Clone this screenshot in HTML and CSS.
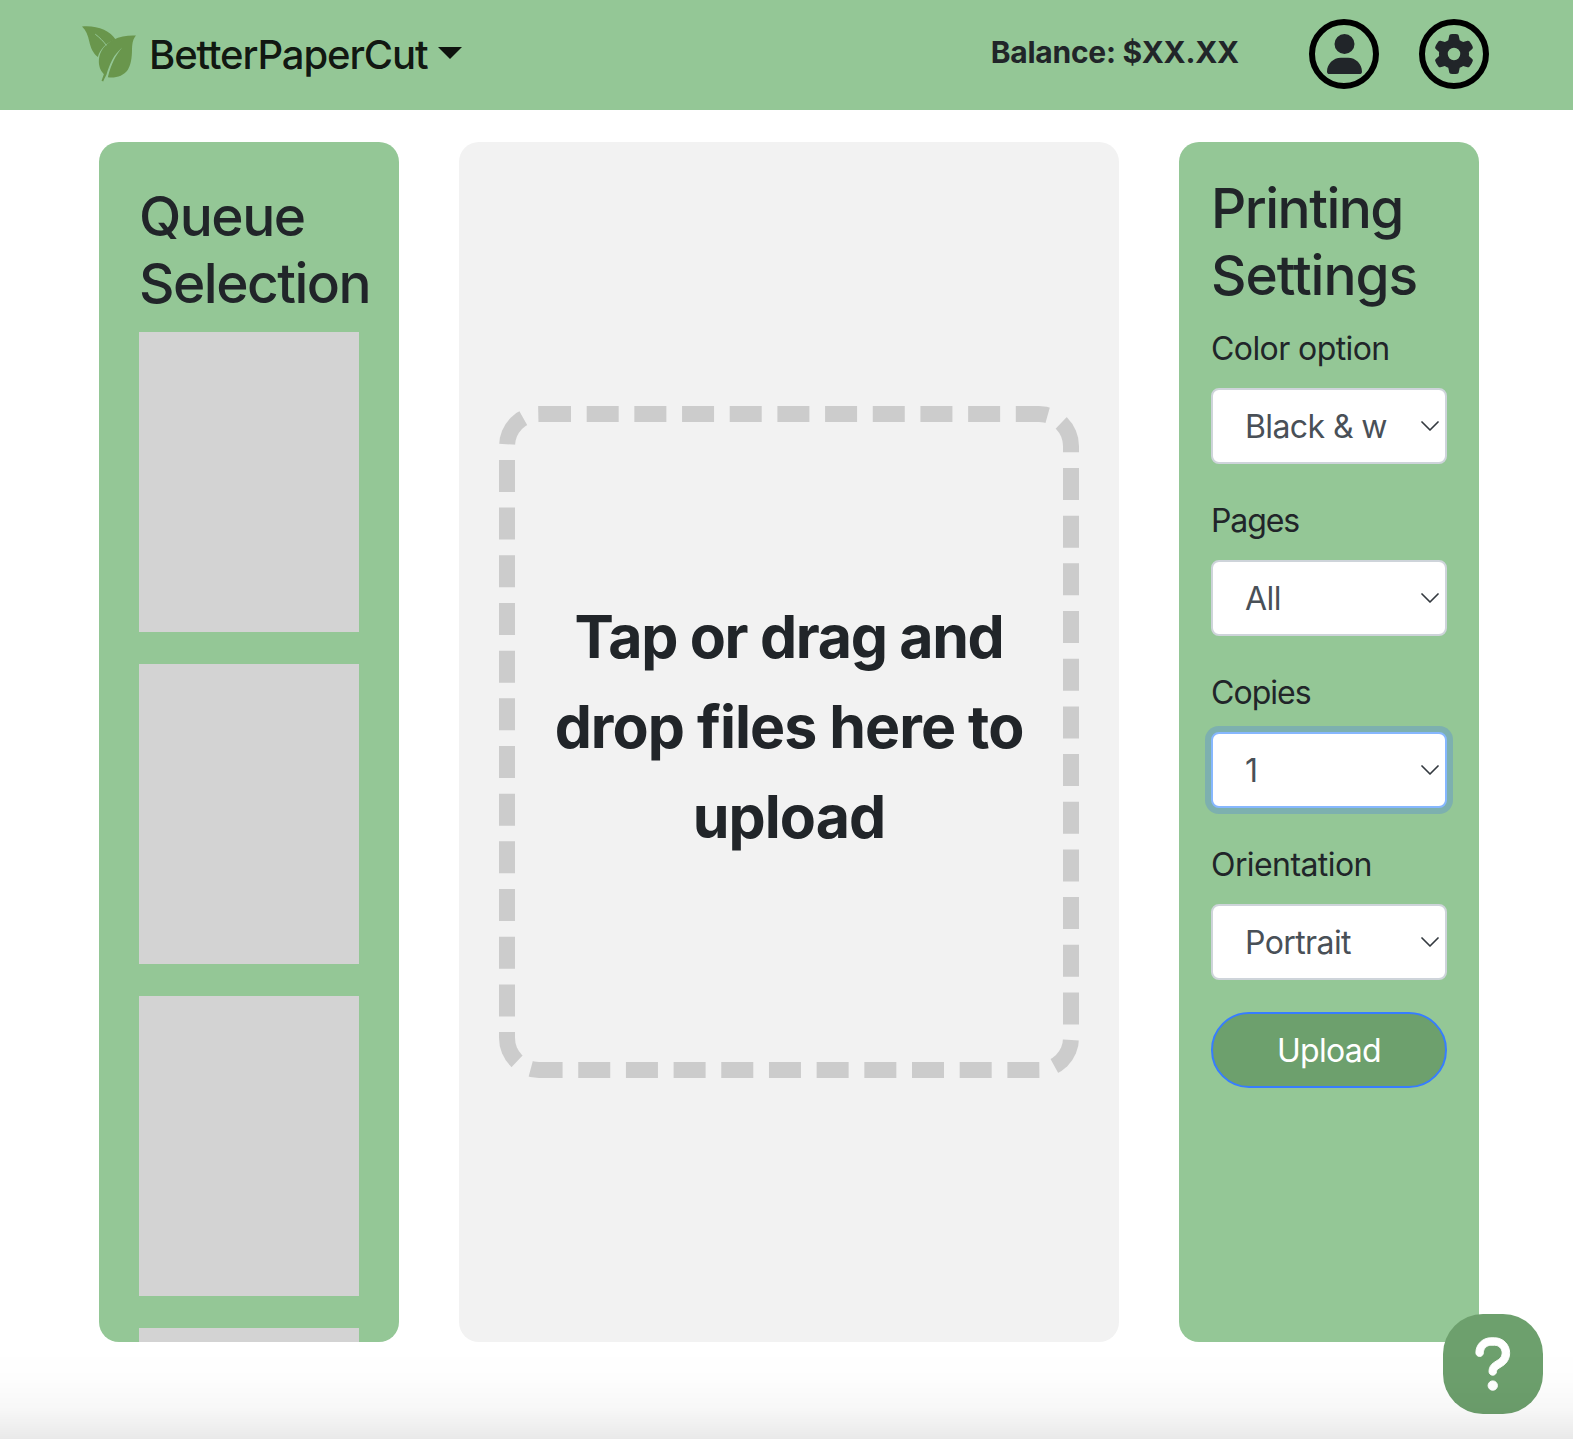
FILE: index.html
```html
<!DOCTYPE html>
<html lang="en">
<head>
<meta charset="utf-8">
<title>BetterPaperCut</title>
<link rel="stylesheet" href="styles.css">
</head>
<body>
<header class="navbar">
  <a class="brand">
    <svg class="brand-logo" viewBox="66 78 163 168" aria-hidden="true">
      <path d="M66 79C110 75 150 90 168 119C153 123 141 130 132 139C123 149 117 158 114 171C98 158 92 142 88 124C84 106 78 90 66 79Z"/>
      <path d="M229 106C220 116 218 128 217 146C217 176 213 196 204 210C191 228 168 235 144 232C149 212 155 195 162 181C169 167 178 154 188 142C175 154 165 165 157 180C149 195 144 210 140 224C136 232 132 239 130 245L125 243C127 236 130 230 132 223C120 209 116 196 117 179C119 153 136 132 161 119C181 108 205 105 229 106Z"/>
      <path class="brand-vein" d="M107 103C119 112 130 123 139 135"/>
    </svg>
    <span class="brand-name">BetterPaperCut</span>
    <span class="caret"></span>
  </a>
  <div class="account">
    <span class="balance">Balance: $XX.XX</span>
    <button class="round-btn" aria-label="Account">
      <svg width="35" height="40" viewBox="0 0 448 512"><path d="M224 256A128 128 0 1 0 224 0a128 128 0 1 0 0 256zm-45.7 48C79.8 304 0 383.8 0 482.3C0 498.7 13.3 512 29.7 512H418.3c16.4 0 29.7-13.3 29.7-29.7C448 383.8 368.2 304 269.7 304H178.3z"/></svg>
    </button>
    <button class="round-btn" aria-label="Settings">
      <svg width="40" height="40" viewBox="0 0 512 512"><path d="M495.9 166.6c3.2 8.7 .5 18.4-6.4 24.6l-43.3 39.4c1.1 8.3 1.7 16.8 1.7 25.4s-.6 17.1-1.7 25.4l43.3 39.4c6.9 6.2 9.6 15.9 6.4 24.6c-4.4 11.9-9.7 23.3-15.8 34.3l-4.7 8.1c-6.6 11-14 21.4-22.1 31.2c-5.9 7.2-15.7 9.6-24.5 6.8l-55.7-17.7c-13.4 10.3-28.2 18.9-44 25.4l-12.5 57.1c-2 9.1-9 16.3-18.2 17.8c-13.8 2.3-28 3.5-42.5 3.5s-28.7-1.2-42.5-3.5c-9.2-1.5-16.2-8.7-18.2-17.8l-12.5-57.1c-15.8-6.5-30.6-15.1-44-25.4L83.1 425.9c-8.8 2.8-18.6 .3-24.5-6.8c-8.1-9.8-15.5-20.2-22.1-31.2l-4.7-8.1c-6.1-11-11.4-22.4-15.8-34.3c-3.2-8.7-.5-18.4 6.4-24.6l43.3-39.4C64.6 273.1 64 264.6 64 256s.6-17.1 1.7-25.4L22.4 191.2c-6.9-6.2-9.6-15.9-6.4-24.6c4.4-11.9 9.7-23.3 15.8-34.3l4.7-8.1c6.6-11 14-21.4 22.1-31.2c5.9-7.2 15.7-9.6 24.5-6.8l55.7 17.7c13.4-10.3 28.2-18.9 44-25.4l12.5-57.1c2-9.1 9-16.3 18.2-17.8C227.3 1.2 241.5 0 256 0s28.7 1.2 42.5 3.5c9.2 1.5 16.2 8.7 18.2 17.8l12.5 57.1c15.8 6.5 30.6 15.1 44 25.4l55.7-17.7c8.8-2.8 18.6-.3 24.5 6.8c8.1 9.8 15.5 20.2 22.1 31.2l4.7 8.1c6.1 11 11.4 22.4 15.8 34.3zM256 336a80 80 0 1 0 0-160 80 80 0 1 0 0 160z"/></svg>
    </button>
  </div>
</header>

<main class="workspace">
  <section class="panel queue">
    <h2 class="panel-title queue-title">Queue<br>Selection</h2>
    <div class="queue-item"></div>
    <div class="queue-item"></div>
    <div class="queue-item"></div>
    <div class="queue-item"></div>
  </section>

  <section class="preview">
    <div class="dropzone">
      <p class="dropzone-text"><span class="dropzone-lead">Tap or drag and</span><br>drop files here to<br>upload</p>
    </div>
  </section>

  <section class="panel settings">
    <h2 class="panel-title"><span class="title-tight">Printing</span><br>Settings</h2>
    <div class="field">
      <label class="field-label" for="color">Color option</label>
      <div class="select-wrap">
        <select class="select" id="color"><option>Black &amp; white</option><option>Color</option></select>
        <svg class="chevron" viewBox="0 0 18 11"><path d="M1 1L9 9L17 1"/></svg>
      </div>
    </div>
    <div class="field">
      <label class="field-label pages-label" for="pages">Pages</label>
      <div class="select-wrap">
        <select class="select" id="pages"><option>All</option></select>
        <svg class="chevron" viewBox="0 0 18 11"><path d="M1 1L9 9L17 1"/></svg>
      </div>
    </div>
    <div class="field">
      <label class="field-label copies-label" for="copies">Copies</label>
      <div class="select-wrap">
        <select class="select is-focused" id="copies"><option>1</option></select>
        <svg class="chevron" viewBox="0 0 18 11"><path d="M1 1L9 9L17 1"/></svg>
      </div>
    </div>
    <div class="field">
      <label class="field-label" for="orientation">Orientation</label>
      <div class="select-wrap">
        <select class="select" id="orientation"><option>Portrait</option></select>
        <svg class="chevron" viewBox="0 0 18 11"><path d="M1 1L9 9L17 1"/></svg>
      </div>
    </div>
    <button class="upload-btn">Upload</button>
  </section>
</main>

<button class="help-btn" aria-label="Help">
  <svg width="37.5" height="60" viewBox="0 0 320 512"><path d="M80 160c0-35.3 28.7-64 64-64h32c35.3 0 64 28.7 64 64v3.6c0 21.8-11.1 42.1-29.4 53.8l-42.2 27.1c-25.2 16.2-40.4 44.1-40.4 74V320c0 17.7 14.3 32 32 32s32-14.3 32-32v-1.4c0-8.2 4.2-15.8 11-20.2l42.2-27.1c36.6-23.6 58.8-64.1 58.8-107.7V160c0-70.7-57.3-128-128-128H144C73.3 32 16 89.3 16 160c0 17.7 14.3 32 32 32s32-14.3 32-32zm80 320a40 40 0 1 0 0-80 40 40 0 1 0 0 80z"/></svg>
</button>
<div class="bottom-shade"></div>
</body>
</html>
```
FILE: styles.css
```css
* {
  box-sizing: border-box;
}

body {
  margin: 0;
  height: 1439px;
  overflow: hidden;
  background: #fff;
  color: #212529;
  font: 32px/1.5 Inter, "Liberation Sans", sans-serif;
}

button,
select {
  margin: 0;
  font: inherit;
}

/* Top bar */
.navbar {
  display: flex;
  align-items: center;
  justify-content: space-between;
  height: 110px;
  padding: 0 84px 0 82px;
  background: #94c796;
}

.brand {
  display: flex;
  align-items: center;
  color: rgba(0, 0, 0, 0.9);
}

.brand-logo {
  width: 54px;
  height: 56px;
  margin: 0 13px 2px 0;
  fill: #69964c;
}

.brand-vein {
  fill: none;
  stroke: #94c796;
  stroke-width: 3;
  stroke-linecap: round;
}

.brand-name {
  font-size: 40px;
  font-weight: 500;
  letter-spacing: -1.1px;
}

.caret {
  margin: -4px 0 0 10px;
  border: 12px solid transparent;
  border-top-color: currentColor;
  border-bottom: 0;
}

.account {
  display: flex;
  align-items: center;
  padding-bottom: 2px;
}

.balance {
  margin: 0 70px 4px 0;
  font-size: 30px;
  font-weight: 700;
  letter-spacing: -0.25px;
}

.round-btn {
  display: flex;
  align-items: center;
  justify-content: center;
  width: 70px;
  height: 70px;
  padding: 0;
  border: 6px solid #000;
  border-radius: 50%;
  background: none;
  fill: #212529;
}

.round-btn + .round-btn {
  margin-left: 40px;
}

/* Three columns */
.workspace {
  display: grid;
  grid-template-columns: 300px 660px 300px;
  gap: 60px;
  width: 1380px;
  height: 1200px;
  margin: 32px 0 0 99px;
}

.panel {
  overflow: hidden;
  border-radius: 20px;
  background: #94c796;
}

.panel-title {
  margin: 0 0 15px;
  padding-top: 1px;
  font-size: 55px;
  font-weight: 500;
  line-height: 67.2px;
  letter-spacing: -1.04px;
}

.title-tight {
  letter-spacing: -1.5px;
}

.queue {
  padding: 40px 40px 0;
}

.queue-title {
  letter-spacing: -1.5px;
  white-space: nowrap;
}

.queue-item {
  height: 300px;
  margin-bottom: 32px;
  background: #d3d3d3;
}

.preview {
  display: flex;
  align-items: center;
  padding: 0 40px;
  border-radius: 20px;
  background: #f2f2f2;
}

.dropzone {
  width: 580px;
  height: 672px;
  padding-top: 170px;
  border: 16px dashed #ccc;
  border-radius: 40px;
  text-align: center;
}

.dropzone-text {
  margin: 0;
  font-size: 59px;
  font-weight: 700;
  line-height: 90px;
  letter-spacing: -0.96px;
}

.dropzone-lead {
  letter-spacing: -1.32px;
}

/* Printing options */
.settings {
  padding: 32px;
}

.field {
  margin-bottom: 32px;
}

.field-label {
  display: block;
  margin-bottom: 15px;
  line-height: 49px;
  letter-spacing: -0.58px;
}

.pages-label {
  letter-spacing: -1.1px;
}

.copies-label {
  letter-spacing: -0.95px;
}

.select-wrap {
  position: relative;
  height: 76px;
}

.select {
  display: block;
  width: 100%;
  height: 76px;
  padding: 13px 58px 11px 32px;
  border: 2px solid #ced4da;
  border-radius: 8px;
  outline: 0;
  background: #fff;
  color: #495057;
  letter-spacing: -0.6px;
  appearance: none;
}

.select.is-focused {
  border-color: #86b7fe;
  box-shadow: 0 0 0 6px rgba(55, 107, 253, 0.25);
}

.chevron {
  position: absolute;
  top: 33px;
  right: 8px;
  width: 18px;
  height: 11px;
  fill: none;
  stroke: #343a40;
  stroke-width: 1.7;
  stroke-linecap: round;
  stroke-linejoin: round;
}

.upload-btn {
  display: block;
  width: 100%;
  height: 76px;
  padding: 2px 0 0;
  border: 2px solid #377dff;
  border-radius: 38px;
  background: #6da06d;
  color: #fff;
  letter-spacing: -0.7px;
}

/* Floating help button */
.help-btn {
  position: fixed;
  right: 30px;
  bottom: 25px;
  display: flex;
  align-items: center;
  justify-content: center;
  width: 100px;
  height: 100px;
  padding: 0;
  border: 0;
  border-radius: 40px;
  background: #6da06d;
  fill: #fff;
  stroke: #fff;
  stroke-width: 8;
}

.bottom-shade {
  position: fixed;
  inset: auto 0 0;
  height: 90px;
  background: linear-gradient(rgba(0, 0, 0, 0), rgba(0, 0, 0, 0.006) 35%, rgba(0, 0, 0, 0.03) 68%, rgba(0, 0, 0, 0.085));
  pointer-events: none;
}
```
